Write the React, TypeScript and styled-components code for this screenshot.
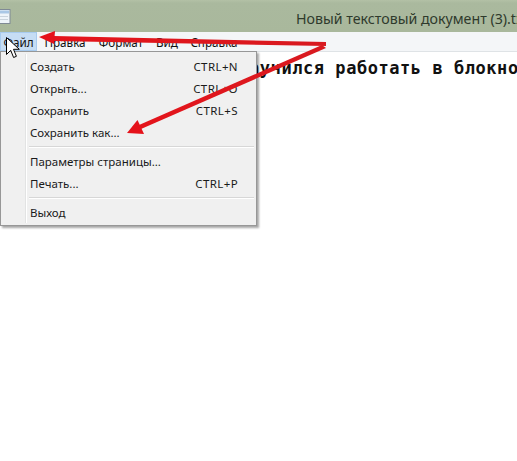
import React from "react";
import styled, { createGlobalStyle } from "styled-components";

const Global = createGlobalStyle`
  html, body { margin: 0; padding: 0; background: #ffffff; }
  body { width: 517px; height: 461px; overflow: hidden; }
`;

const Window = styled.div`
  position: relative;
  width: 517px;
  height: 461px;
  display: flex;
  flex-direction: column;
  background: #ffffff;
  overflow: hidden;
  font-family: "Noto Sans", "Open Sans", sans-serif;
`;

const TitleBar = styled.div`
  height: 32px;
  flex: none;
  display: flex;
  align-items: center;
  background: linear-gradient(#b3c1a6 0px, #aab99e 3px, #a9b89c 100%);
  position: relative;
  overflow: hidden;
`;

const AppIcon = styled.div`
  width: 11px;
  height: 15px;
  flex: none;
  display: flex;
`;

const Title = styled.div`
  margin-left: 285px;
  white-space: nowrap;
  font-size: 14.2px;
  color: #2f3a2c;
  margin-top: 4px;
`;

const MenuBar = styled.div`
  height: 19px;
  flex: none;
  display: flex;
  align-items: center;
  background: #f4f6f8;
  border-bottom: 1px solid #dfe3e6;
  font-size: 11.7px;
  color: #111;
`;

const MenuItem = styled.div<{ $active?: boolean; $w: number }>`
  width: ${(p) => p.$w}px;
  height: 19px;
  box-sizing: border-box;
  display: flex;
  align-items: center;
  justify-content: center;
  padding-top: 1px;
  background: ${(p) => (p.$active ? "#c6ddf4" : "transparent")};
  border: 1px solid ${(p) => (p.$active ? "#a8cbee" : "transparent")};
`;

const Editor = styled.div`
  flex: 1;
  background: #ffffff;
  padding-top: 6px;
`;

const EditorLine = styled.div`
  white-space: nowrap;
  font-family: "DejaVu Sans Mono", "Liberation Mono", monospace;
  font-weight: bold;
  font-size: 17px;
  letter-spacing: 0.55px;
  color: #111;
  padding-left: 152px;
  line-height: 20px;
`;

const Dropdown = styled.div`
  position: absolute;
  left: 0;
  top: 51px;
  width: 257px;
  box-sizing: border-box;
  background: #f0f0f0;
  border: 1px solid #979797;
  padding: 3px 2px 2px 2px;
  box-shadow: 2px 2px 2px rgba(0, 0, 0, 0.35);
  font-size: 11.5px;
  color: #1a1a1a;
  display: flex;
  flex-direction: column;
`;

const Gutter = styled.div`
  position: absolute;
  left: 24px;
  top: 2px;
  bottom: 2px;
  width: 1px;
  background: #e2e3e3;
  border-right: 1px solid #ffffff;
`;

const Row = styled.div`
  height: 22px;
  display: flex;
  align-items: center;
  padding-left: 27px;
  padding-right: 16px;
`;

const RowLabel = styled.span`
  flex: 1;
`;

const Shortcut = styled.span`
  letter-spacing: 0.4px;
`;

const Separator = styled.div`
  height: 7px;
  display: flex;
  align-items: center;
  padding-left: 26px;
  &::after {
    content: "";
    flex: 1;
    height: 1px;
    background: #d7d7d7;
    border-bottom: 1px solid #ffffff;
  }
`;

const Overlay = styled.svg`
  position: absolute;
  left: 0;
  top: 0;
  pointer-events: none;
`;

const items: Array<{ label: string; key?: string } | "sep"> = [
  { label: "Создать", key: "CTRL+N" },
  { label: "Открыть...", key: "CTRL+O" },
  { label: "Сохранить", key: "CTRL+S" },
  { label: "Сохранить как..." },
  "sep",
  { label: "Параметры страницы..." },
  { label: "Печать...", key: "CTRL+P" },
  "sep",
  { label: "Выход" },
];

const menus: Array<[string, number]> = [
  ["Файл", 37],
  ["Правка", 56],
  ["Формат", 56],
  ["Вид", 36],
  ["Справка", 58],
];

export default function App() {
  return (
    <>
      <Global />
      <Window>
        <TitleBar>
          <AppIcon>
            <svg width="11" height="15" viewBox="0 0 11 15">
              <rect x="-4" y="0.5" width="14" height="14" fill="#eef4fa" stroke="#7f8a95" />
              <rect x="-3" y="1.5" width="12" height="3" fill="#a9c7e6" />
              <line x1="-3" y1="7.5" x2="8" y2="7.5" stroke="#c9d3dc" />
              <line x1="-3" y1="10.5" x2="8" y2="10.5" stroke="#c9d3dc" />
            </svg>
          </AppIcon>
          <Title>Новый текстовый документ (3).txt</Title>
        </TitleBar>
        <MenuBar>
          {menus.map(([m, w], i) => (
            <MenuItem key={m} $w={w} $active={i === 0}>
              {m}
            </MenuItem>
          ))}
        </MenuBar>
        <Editor>
          <EditorLine>Вот я и научился работать в блокноте</EditorLine>
        </Editor>

        <Dropdown>
          <Gutter />
          {items.map((it, i) =>
            it === "sep" ? (
              <Separator key={i} />
            ) : (
              <Row key={i}>
                <RowLabel>{it.label}</RowLabel>
                {it.key && <Shortcut>{it.key}</Shortcut>}
              </Row>
            )
          )}
        </Dropdown>

        <Overlay width="517" height="461" viewBox="0 0 517 461">
          <defs>
            <linearGradient id="rg" x1="0" y1="0" x2="1" y2="0">
              <stop offset="0" stopColor="#e4141b" />
              <stop offset="1" stopColor="#d81a20" />
            </linearGradient>
          </defs>
          <polygon points="326,42 326,46 54,41 54,36" fill="url(#rg)" />
          <polygon points="39,37 55,31 54,44" fill="#e5121a" />
          <polygon points="322,45 326,48 141,129 139,125" fill="url(#rg)" />
          <polygon points="127,133 137.5,120 144,134" fill="#e5121a" />
          <g transform="translate(6,37)">
            <path
              d="M0.5 0.5 L0.5 17.5 L4.7 13.3 L7.6 20.5 L10.4 19.3 L7.5 12.3 L13.3 12.3 Z"
              fill="#ffffff"
              stroke="#000000"
              strokeWidth="1"
              strokeLinejoin="miter"
            />
          </g>
        </Overlay>
      </Window>
    </>
  );
}
